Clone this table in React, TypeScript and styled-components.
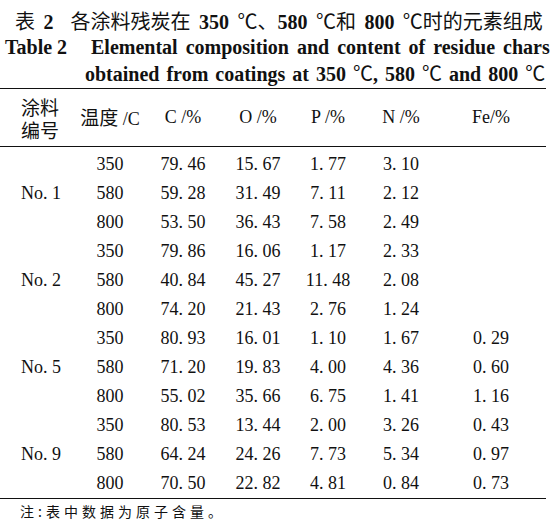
import React from 'react';
import styled, { createGlobalStyle } from 'styled-components';

const GlobalStyle = createGlobalStyle`
  body {
    margin: 0;
    background: #fff;
    color: #111;
    font-family: 'Liberation Serif', 'Noto Sans CJK SC', serif;
  }
`;

const COLS = '80px 60px 86px 64px 76px 70px 110px';

const Page = styled.div`
  width: 546px;
  padding-top: 8px;
`;

const CaptionCn = styled.div`
  font-size: 20px;
  line-height: 25px;
  padding-left: 15px;
  white-space: pre;
  word-spacing: 4px;
  font-family: 'Noto Sans CJK SC', sans-serif;

  b {
    font-family: 'Liberation Serif', serif;
    font-weight: 700;
  }
`;

const CaptionEn = styled.div`
  display: grid;
  grid-template-columns: 86px 1fr;
  font-size: 20px;
  line-height: 25px;
  font-weight: 700;
  padding-left: 5px;
  padding-bottom: 1px;
  white-space: nowrap;
`;

const CaptionLabel = styled.span``;

const CaptionText = styled.span`
  word-spacing: 3px;
`;

const Indent = styled.span`
  margin-left: -6px;
  word-spacing: 2px;
`;

const Deg = styled.span`
  font-weight: 400;
  font-family: 'Noto Sans CJK SC', sans-serif;
`;

const Table = styled.div`
  border-top: 1.5px solid #111;
  border-bottom: 1.5px solid #111;
`;

const HeaderRow = styled.div`
  display: grid;
  grid-template-columns: ${COLS};
  height: 57px;
  align-items: center;
  border-bottom: 1.5px solid #111;
  font-size: 18px;
`;

const HeadCell = styled.div<{ $cn?: boolean }>`
  text-align: center;
  white-space: nowrap;
  font-size: ${(p) => (p.$cn ? '19px' : '18px')};
  line-height: 23px;
  font-family: ${(p) =>
    p.$cn ? "'Noto Sans CJK SC', sans-serif" : "'Liberation Serif', serif"};
`;

const Unit = styled.span`
  font-family: 'Liberation Serif', serif;
  font-size: 18px;
`;

const Body = styled.div`
  padding-top: 3px;
`;

const Group = styled.div`
  display: grid;
  grid-template-columns: ${COLS};
  grid-template-rows: repeat(3, 29px);
  align-items: center;
  font-size: 18px;
`;

const GroupLabel = styled.div`
  grid-row: 1 / span 3;
  grid-column: 1;
  text-align: center;
  padding-left: 2px;
`;

const Cell = styled.div`
  text-align: center;
  white-space: pre;
`;

const Note = styled.div`
  font-family: 'Noto Sans CJK SC', sans-serif;
  font-size: 14px;
  letter-spacing: 4px;
  line-height: 20px;
  padding: 2px 0 0 20px;
`;

type Row = string[];

const groups: { label: string; rows: Row[] }[] = [
  {
    label: 'No. 1',
    rows: [
      ['350', '79. 46', '15. 67', '1. 77', '3. 10', ''],
      ['580', '59. 28', '31. 49', '7. 11', '2. 12', ''],
      ['800', '53. 50', '36. 43', '7. 58', '2. 49', ''],
    ],
  },
  {
    label: 'No. 2',
    rows: [
      ['350', '79. 86', '16. 06', '1. 17', '2. 33', ''],
      ['580', '40. 84', '45. 27', '11. 48', '2. 08', ''],
      ['800', '74. 20', '21. 43', '2. 76', '1. 24', ''],
    ],
  },
  {
    label: 'No. 5',
    rows: [
      ['350', '80. 93', '16. 01', '1. 10', '1. 67', '0. 29'],
      ['580', '71. 20', '19. 83', '4. 00', '4. 36', '0. 60'],
      ['800', '55. 02', '35. 66', '6. 75', '1. 41', '1. 16'],
    ],
  },
  {
    label: 'No. 9',
    rows: [
      ['350', '80. 53', '13. 44', '2. 00', '3. 26', '0. 43'],
      ['580', '64. 24', '24. 26', '7. 73', '5. 34', '0. 97'],
      ['800', '70. 50', '22. 82', '4. 81', '0. 84', '0. 73'],
    ],
  },
];

export default function App() {
  return (
    <Page>
      <GlobalStyle />
      <CaptionCn>
        表 <b>2</b>{'  '}各涂料残炭在 <b>350</b> ℃、<b>580</b> ℃和 <b>800</b> ℃时的元素组成
      </CaptionCn>
      <CaptionEn>
        <CaptionLabel>Table 2</CaptionLabel>
        <CaptionText>
          Elemental composition and content of residue chars
          <br />
          <Indent>
            obtained from coatings at 350 <Deg>℃</Deg>,{'  '}580 <Deg>℃</Deg>{'  '}and 800{' '}
            <Deg>℃</Deg>
          </Indent>
        </CaptionText>
      </CaptionEn>
      <Table>
        <HeaderRow>
          <HeadCell $cn>
            涂料
            <br />
            编号
          </HeadCell>
          <HeadCell $cn>
            温度 <Unit>/C</Unit>
          </HeadCell>
          <HeadCell>C /%</HeadCell>
          <HeadCell>O /%</HeadCell>
          <HeadCell>P /%</HeadCell>
          <HeadCell>N /%</HeadCell>
          <HeadCell>Fe/%</HeadCell>
        </HeaderRow>
        <Body>
          {groups.map((g) => (
            <Group key={g.label}>
              <GroupLabel>{g.label}</GroupLabel>
              {g.rows.map((r) => r.map((v, i) => <Cell key={r[0] + i}>{v}</Cell>))}
            </Group>
          ))}
        </Body>
      </Table>
      <Note>注:表中数据为原子含量。</Note>
    </Page>
  );
}
